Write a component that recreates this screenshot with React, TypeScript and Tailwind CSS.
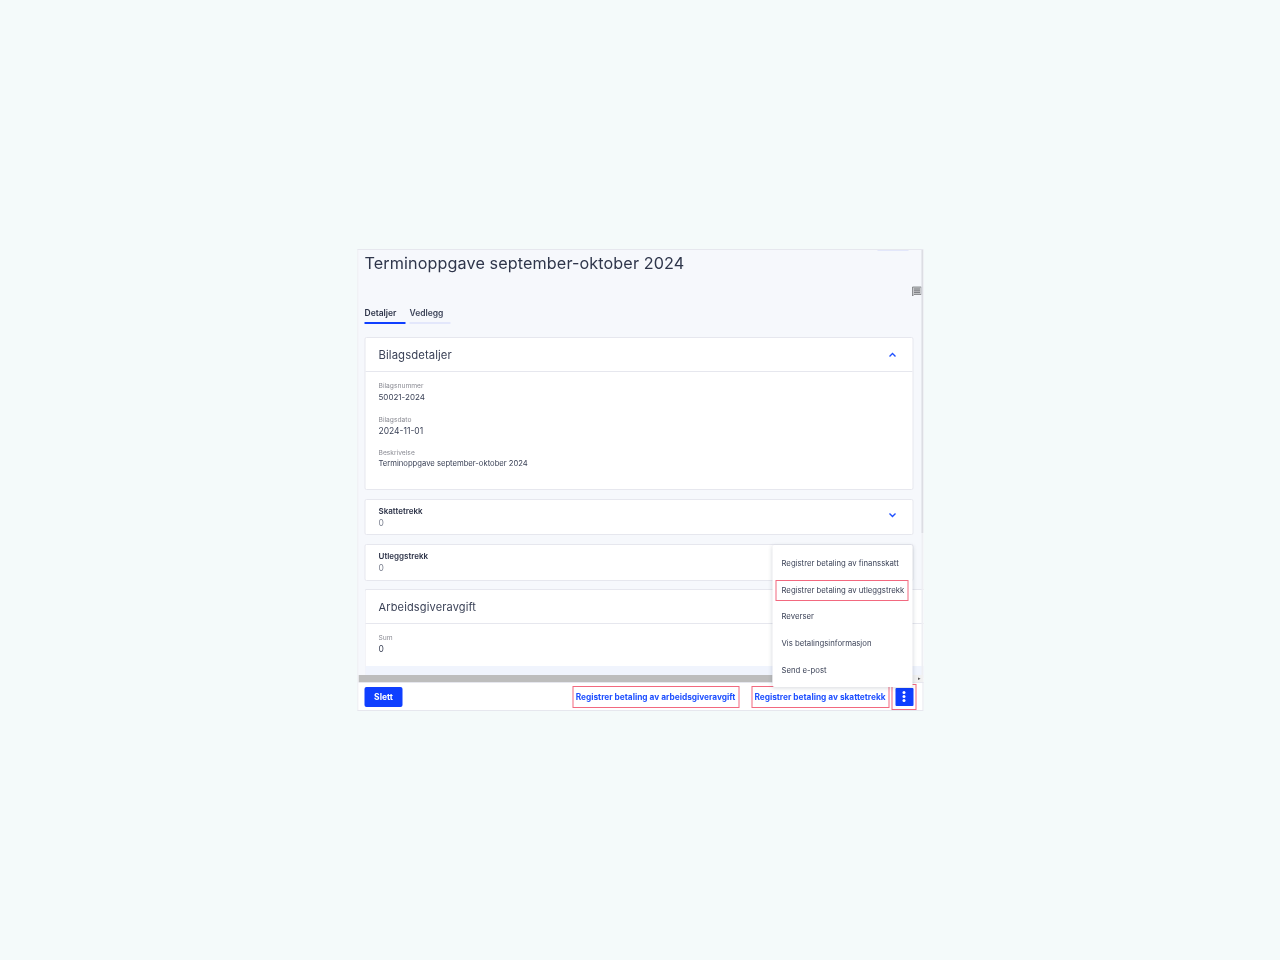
import React from "react";

const font = { fontFamily: '"Inter", "Noto Sans", sans-serif' };

function Field({ label, value, className = "", valueClass = "text-[7.65px]" }: { label: string; value: string; className?: string; valueClass?: string }) {
  return (
    <div className={className}>
      <div className="text-[6.7px] leading-[9px] text-[#8b8c94]">{label}</div>
      <div className={`${valueClass} leading-[12px] text-[#3b4257]`}>{value}</div>
    </div>
  );
}

function Chevron({ up }: { up?: boolean }) {
  return (
    <svg width="8" height="6" viewBox="0 0 8 6" fill="none" className="shrink-0">
      <path d={up ? "M1 4.5 4 1.5 7 4.5" : "M1 1.5 4 4.5 7 1.5"} stroke="#1f50ff" strokeWidth="1.4" />
    </svg>
  );
}

function SummaryCard({ title, chevron }: { title: string; chevron?: boolean }) {
  return (
    <div className="h-[36.8px] bg-white border border-[#e6e7ee] rounded-[2px] pl-[13px] pr-[16.5px] flex items-center justify-between">
      <div className="pt-[1px]">
        <div className="text-[8px] leading-[11px] font-semibold text-[#2d3348]">{title}</div>
        <div className="text-[8.5px] leading-[11px] text-[#7b8090] mt-[1px]">0</div>
      </div>
      {chevron && <div className="mb-[4px]"><Chevron /></div>}
    </div>
  );
}

const hl = "border-[1.4px] border-[#f2697f]";
const link = "h-[22px] pt-[1px] flex items-center justify-center text-[8.3px] font-bold text-[#1f50ff] whitespace-nowrap";

export default function App() {
  return (
    <div className="w-full h-[960px] bg-[#f4fafa] flex items-center justify-center" style={font}>
      <div className="relative w-[566px] h-[462px] bg-white border-y border-l border-[#e6e7ee] flex flex-col translate-x-[0.5px] blur-[0.3px]">
        <div className="relative h-[432px] bg-[#f6f8fc] overflow-hidden pl-[6px]">
          <div className="absolute top-0 right-[15px] w-[31px] h-[1px] bg-[#e3e7fb]" />
          <div className="absolute top-0 right-0 w-[2px] h-full bg-[#eeeff3]" />
          <div className="absolute top-0 right-0 w-[2px] h-[283px] bg-[#dcdde3]" />
          <h1 className="text-[16.2px] leading-[26px] text-[#2f364b] tracking-[0.1px]">Terminoppgave september-oktober 2024</h1>
          <div className="flex justify-end h-[12px] mt-[10px] pr-[1px]">
            <svg width="11" height="11" viewBox="0 0 11 11" fill="none">
              <path d="M1 1h9v7.5H2.5L1 10z" fill="#c9cacd" stroke="#77787c" strokeWidth="0.8" />
              <path d="M2.5 3h6M2.5 4.8h6M2.5 6.6h6" stroke="#66676b" strokeWidth="0.8" />
            </svg>
          </div>
          <div className="flex gap-[4px] mt-[7px]">
            <div className="w-[41px] h-[19px] border-b-2 border-[#0f3fff] text-[8.5px] leading-[16px] font-semibold text-[#2d3348]">Detaljer</div>
            <div className="w-[41px] h-[19px] border-b-2 border-[#e3e7fb] text-[8.5px] leading-[16px] font-semibold text-[#3d4459]">Vedlegg</div>
          </div>
          <div className="mt-[13px] w-[549px] flex flex-col gap-[8.6px]">
            <div className="h-[153px] bg-white border border-[#e6e7ee] rounded-[2px]">
              <div className="h-[34px] pt-[1px] border-b border-[#e6e7ee] pl-[13px] pr-[16.5px] flex items-center justify-between">
                <span className="text-[11.3px] text-[#3b4257] tracking-[0.1px]">Bilagsdetaljer</span>
                <Chevron up />
              </div>
              <div className="pl-[13px] pt-[10px]">
                <Field label="Bilagsnummer" value="50021-2024" valueClass="text-[8px]" />
                <Field label="Bilagsdato" value="2024-11-01" className="mt-[12.5px]" valueClass="text-[8.5px]" />
                <Field label="Beskrivelse" value="Terminoppgave september-oktober 2024" className="mt-[12.5px]" />
              </div>
            </div>
            <SummaryCard title="Skattetrekk" chevron />
            <SummaryCard title="Utleggstrekk" />
            <div className="bg-white border-t border-l border-[#e6e7ee] rounded-tl-[2px] h-[90px] w-[563px]">
              <div className="h-[34px] border-b border-[#e6e7ee] pl-[13px] flex items-center">
                <span className="text-[11px] text-[#3b4257] tracking-[0.15px]">Arbeidsgiveravgift</span>
              </div>
              <div className="pl-[13px] pt-[10px]">
                <Field label="Sum" value="0" valueClass="text-[8.5px]" />
              </div>
              <div className="h-[12px] mt-[11px] bg-[#f0f4fd]" />
            </div>
          </div>
          <div className="absolute left-0 right-0 bottom-0 h-[7px] bg-[#f1f1f1] flex">
            <div className="w-[414px] bg-[#bdbdbd]" />
            <div className="ml-auto w-[9px] text-[5px] leading-[7px] text-center text-[#555]">▸</div>
          </div>
        </div>
        <div className="h-[28px] bg-white flex items-center justify-between pl-[6px] pr-[6px] border-t border-r border-[#e6e7ee]">
          <button className="w-[38px] h-[20px] pt-[1px] bg-[#0f3fff] rounded-[2px] text-white text-[8.5px] font-bold">Slett</button>
          <div className="flex items-center">
            <div className={`${hl} ${link} w-[167px]`}>Registrer betaling av arbeidsgiveravgift</div>
            <div className={`${hl} ${link} ml-[12px] w-[138px]`}>Registrer betaling av skattetrekk</div>
            <div className={`${hl} ml-[2.5px] w-[25px] h-[26px] flex items-center justify-center`}>
              <div className="w-[18px] h-[18px] bg-[#0f3fff] rounded-[1px] flex flex-col items-center justify-center gap-[1.5px]">
                <span className="w-[2.5px] h-[2.5px] bg-white rounded-full" />
                <span className="w-[2.5px] h-[2.5px] bg-white rounded-full" />
                <span className="w-[2.5px] h-[2.5px] bg-white rounded-full" />
              </div>
            </div>
          </div>
        </div>
        <div className="absolute left-[414px] top-[295px] w-[140px] h-[142px] bg-white shadow-[0_1px_4px_rgba(40,50,80,0.18)] rounded-[2px] pt-[6px] text-[7.75px] text-[#3b4257]">
          <div className="h-[26.6px] pl-[9px] flex items-center">Registrer betaling av finansskatt</div>
          <div className={`${hl} h-[21px] ml-[3px] mr-[4px] mt-[2px] mb-[3px] pl-[5px] pt-[1px] flex items-center`}>Registrer betaling av utleggstrekk</div>
          <div className="h-[26.6px] pl-[9px] flex items-center">Reverser</div>
          <div className="h-[26.6px] pl-[9px] flex items-center">Vis betalingsinformasjon</div>
          <div className="h-[26.6px] pl-[9px] pt-[1px] flex items-center">Send e-post</div>
        </div>
      </div>
    </div>
  );
}
